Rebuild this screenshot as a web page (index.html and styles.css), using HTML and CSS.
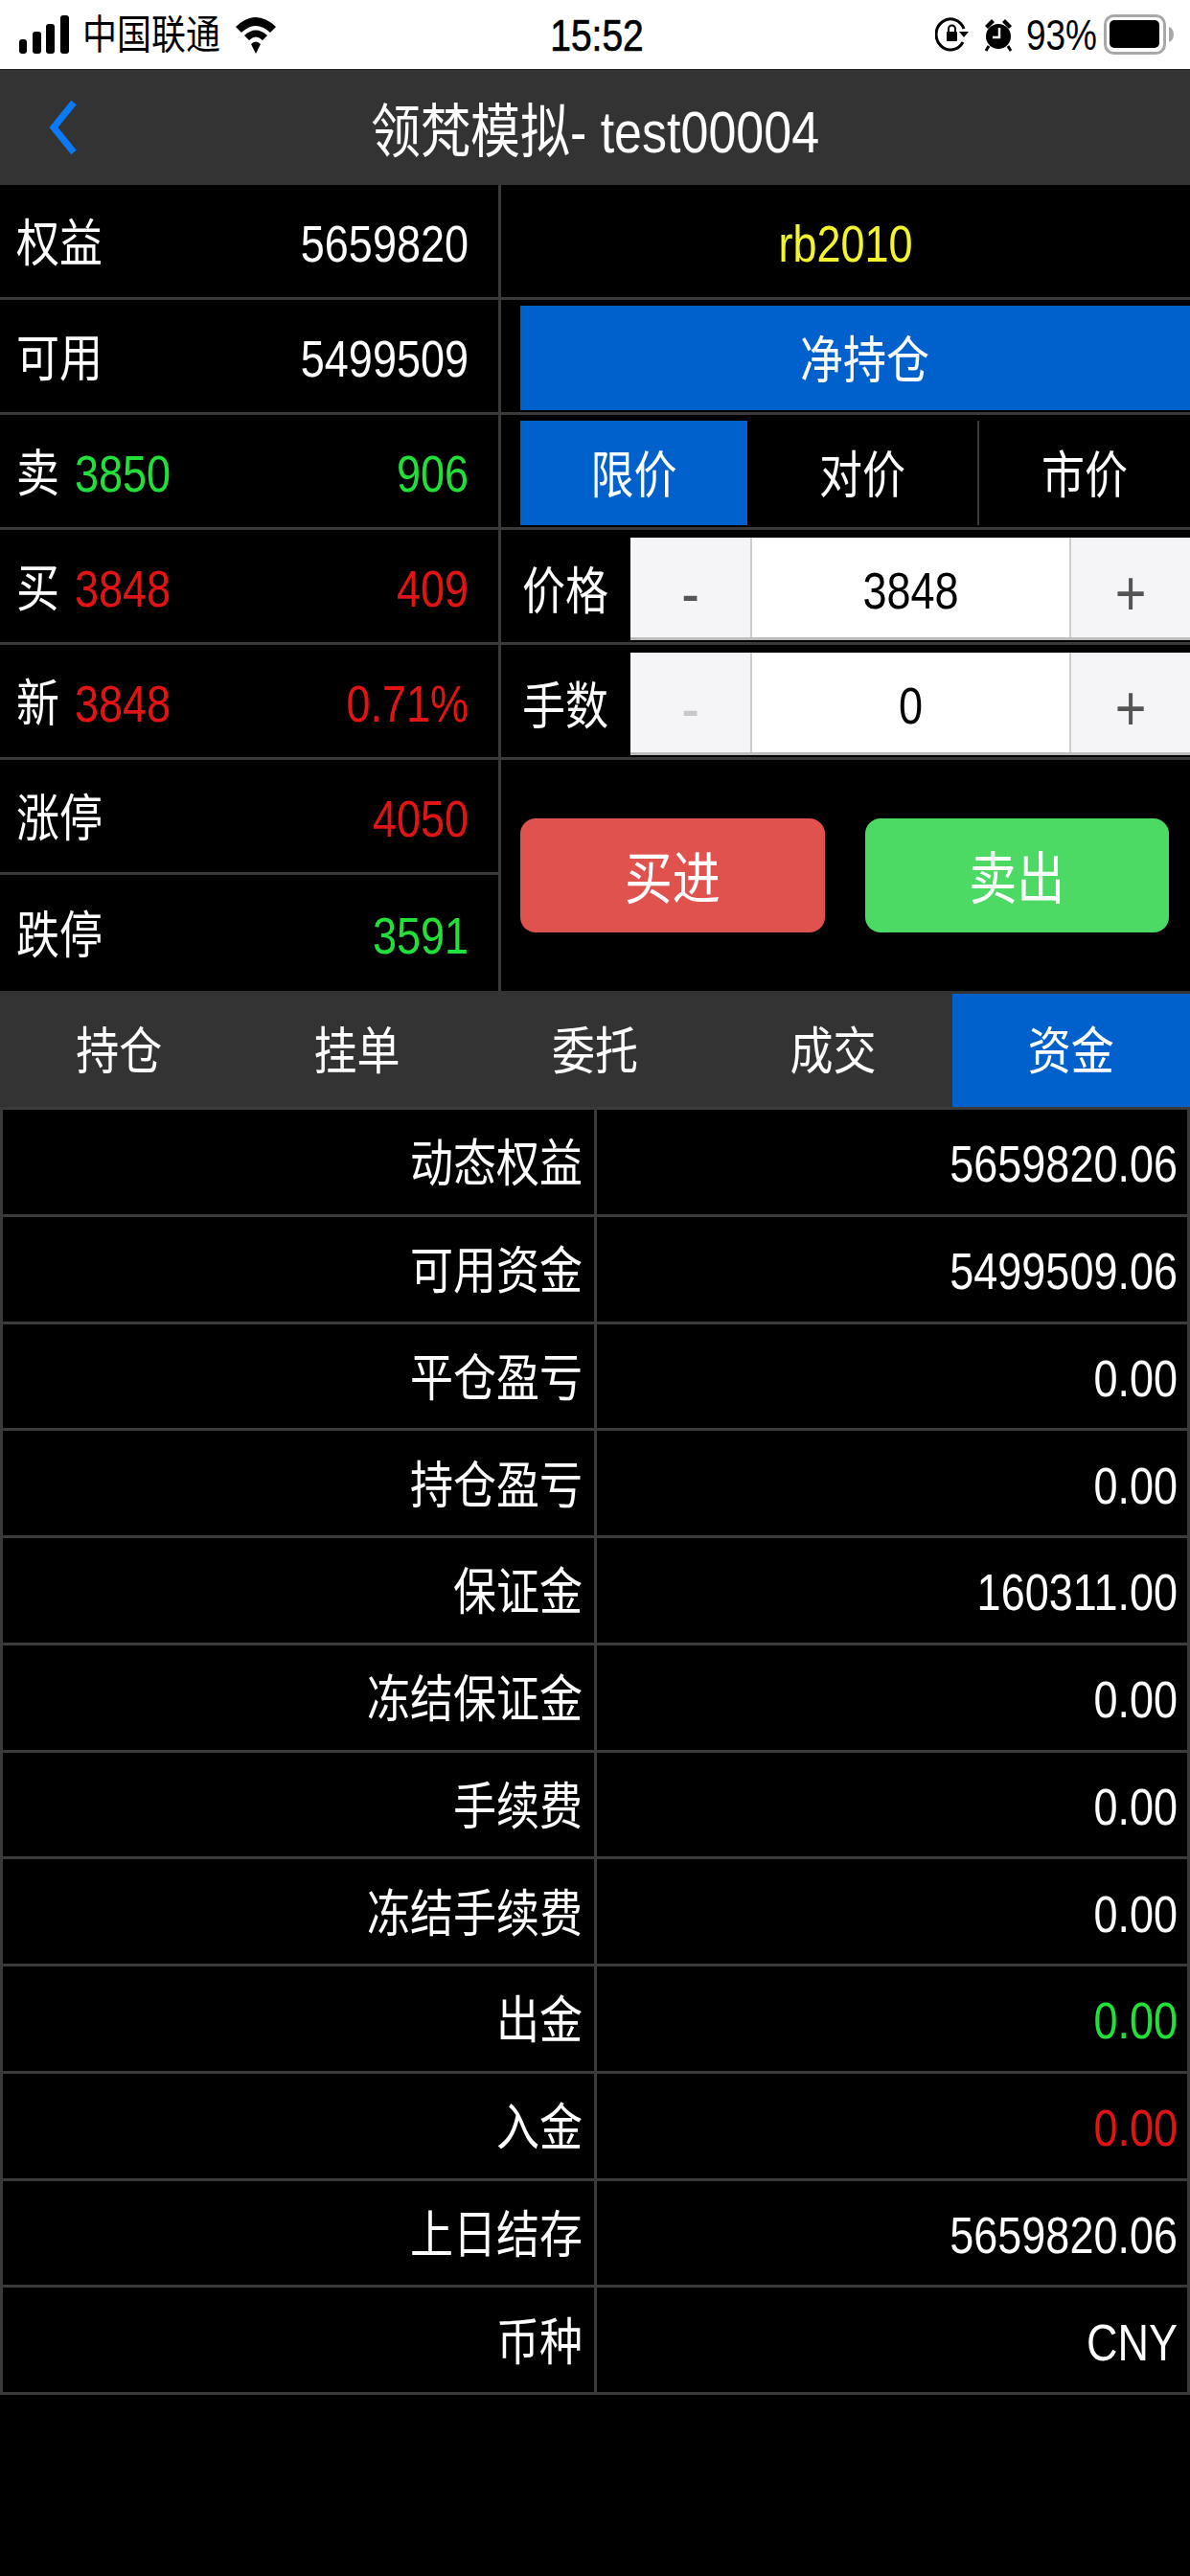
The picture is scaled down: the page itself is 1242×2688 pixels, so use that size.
FILE: index.html
```html
<!DOCTYPE html>
<html lang="zh-CN">
<head>
  <meta charset="UTF-8">
  <title>领梵模拟</title>
  <link rel="stylesheet" href="styles.css">
</head>
<body>
  <div class="status">
    <div class="status-left">
      <svg class="signal" width="52" height="40" viewBox="0 0 52 40">
        <rect x="0" y="25" width="8" height="15" rx="3"/>
        <rect x="14" y="17" width="9" height="23" rx="3"/>
        <rect x="28" y="9" width="9" height="31" rx="3"/>
        <rect x="43" y="0" width="9" height="40" rx="3"/>
      </svg>
      <span class="t carrier">中国联通</span>
      <svg class="wifi" width="46" height="42" viewBox="0 0 46 42">
        <path d="M2 13 Q23 -7 44 13 L38 19 Q23 5 8 19 Z"/>
        <path d="M11 22 Q23 11 35 22 L30 27 Q23 20 16 27 Z"/>
        <path d="M18 31 Q23 26 28 31 L23 41 Z"/>
      </svg>
    </div>
    <span class="t clock">15:52</span>
    <div class="status-right">
      <svg width="36" height="38" viewBox="0 0 36 38">
        <path d="M29 27 A15 16 0 1 1 30 13" fill="none" stroke="#000" stroke-width="3"/>
        <path d="M25 16 L35 16 L30 22 Z"/>
        <rect x="12" y="16" width="11" height="10" rx="1"/>
        <path d="M14 16 V13 a3.500 3.500 0 0 1 7 0 V16" fill="none" stroke="#000" stroke-width="2"/>
      </svg>
      <svg class="alarm" width="30" height="36" viewBox="0 0 30 36">
        <circle cx="15" cy="20" r="13"/>
        <path d="M1 9 L8 2 L11 5 L4 12 Z M29 9 L22 2 L19 5 L26 12 Z"/>
        <path d="M5 30 L2 35 M25 30 L28 35" stroke="#000" stroke-width="3"/>
        <path d="M16 11 V21 H9" fill="none" stroke="#fff" stroke-width="2.500"/>
      </svg>
      <span class="t percent">93%</span>
      <svg width="74" height="42" viewBox="0 0 74 42">
        <rect x="1.500" y="1.500" width="62" height="39" rx="9" fill="none" stroke="#a8a8a8" stroke-width="3"/>
        <rect x="6" y="6" width="52" height="29" rx="5"/>
        <path d="M68 13 Q73 15 73 21 Q73 27 68 29 Z" fill="#a8a8a8"/>
      </svg>
    </div>
  </div>

  <div class="nav">
    <svg class="back" width="32" height="58" viewBox="0 0 32 58">
      <path d="M27 3 L6 29 L27 55" fill="none" stroke="#0a7af5" stroke-width="7"/>
    </svg>
    <span class="t">领梵模拟- test00004</span>
  </div>

  <div class="panel">
    <div class="quotes">
      <div class="stat"><span class="t">权益</span><span class="t">5659820</span></div>
      <div class="stat"><span class="t">可用</span><span class="t">5499509</span></div>
      <div class="stat"><span class="t">卖</span><span class="t price up">3850</span><span class="t end up">906</span></div>
      <div class="stat"><span class="t">买</span><span class="t price down">3848</span><span class="t end down">409</span></div>
      <div class="stat"><span class="t">新</span><span class="t price down">3848</span><span class="t end down">0.71%</span></div>
      <div class="stat"><span class="t">涨停</span><span class="t down">4050</span></div>
      <div class="stat"><span class="t">跌停</span><span class="t up">3591</span></div>
    </div>

    <div class="order">
      <div class="order-row symbol"><span class="t">rb2010</span></div>
      <div class="order-row">
        <div class="net-btn"><span class="t">净持仓</span></div>
      </div>
      <div class="order-row">
        <div class="types">
          <div class="type active"><span class="t">限价</span></div>
          <div class="type"><span class="t">对价</span></div>
          <div class="type split"><span class="t">市价</span></div>
        </div>
      </div>
      <div class="order-row field">
        <span class="t field-label">价格</span>
        <div class="stepper">
          <div class="step"><span class="t">-</span></div>
          <div class="step-value"><span class="t">3848</span></div>
          <div class="step"><span class="t">+</span></div>
        </div>
      </div>
      <div class="order-row field">
        <span class="t field-label">手数</span>
        <div class="stepper">
          <div class="step off"><span class="t">-</span></div>
          <div class="step-value"><span class="t">0</span></div>
          <div class="step"><span class="t">+</span></div>
        </div>
      </div>
      <div class="actions">
        <div class="action buy"><span class="t">买进</span></div>
        <div class="action sell"><span class="t">卖出</span></div>
      </div>
    </div>
  </div>

  <div class="tabs">
    <div class="tab"><span class="t">持仓</span></div>
    <div class="tab"><span class="t">挂单</span></div>
    <div class="tab"><span class="t">委托</span></div>
    <div class="tab"><span class="t">成交</span></div>
    <div class="tab active"><span class="t">资金</span></div>
  </div>

  <table class="funds">
    <tr><td><span class="t">动态权益</span></td><td><span class="t">5659820.06</span></td></tr>
    <tr><td><span class="t">可用资金</span></td><td><span class="t">5499509.06</span></td></tr>
    <tr><td><span class="t">平仓盈亏</span></td><td><span class="t">0.00</span></td></tr>
    <tr><td><span class="t">持仓盈亏</span></td><td><span class="t">0.00</span></td></tr>
    <tr><td><span class="t">保证金</span></td><td><span class="t">160311.00</span></td></tr>
    <tr><td><span class="t">冻结保证金</span></td><td><span class="t">0.00</span></td></tr>
    <tr><td><span class="t">手续费</span></td><td><span class="t">0.00</span></td></tr>
    <tr><td><span class="t">冻结手续费</span></td><td><span class="t">0.00</span></td></tr>
    <tr><td><span class="t">出金</span></td><td><span class="t up">0.00</span></td></tr>
    <tr><td><span class="t">入金</span></td><td><span class="t down">0.00</span></td></tr>
    <tr><td><span class="t">上日结存</span></td><td><span class="t">5659820.06</span></td></tr>
    <tr><td><span class="t">币种</span></td><td><span class="t">CNY</span></td></tr>
  </table>
</body>
</html>
```

FILE: styles.css
```css
* {
  box-sizing: border-box;
}
html, body {
  margin: 0;
  background: #000;
}
body {
  width: 1242px;
  height: 2688px;
  overflow: hidden;
  color: #fff;
  font-family: "Liberation Sans", "Noto Sans CJK SC", sans-serif;
  font-size: 45px;
}

/* the screenshot is stretched a bit taller than wide */
.t {
  display: inline-block;
  line-height: 1;
  transform: translateY(3px) scaleY(1.18);
}
.up { color: #22e03a; }
.down { color: #e01414; }

.status {
  height: 72px;
  background: #fff;
  color: #000;
  display: flex;
  align-items: center;
  justify-content: space-between;
  padding: 0 16px 0 20px;
}
.status .t {
  transform: translateY(1px) scaleY(1.18);
}
.status-left, .status-right {
  display: flex;
  align-items: center;
  width: 300px;
}
.status-right {
  justify-content: flex-end;
}
.carrier {
  font-size: 36px;
  margin-left: 14px;
}
.wifi {
  margin-left: 14px;
}
.clock {
  font-size: 39px;
  -webkit-text-stroke: 0.6px #000;
}
.alarm {
  margin-left: 15px;
}
.percent {
  font-size: 37px;
  margin-left: 14px;
  margin-right: 7px;
}

.nav {
  height: 121px;
  background: #333;
  border-top: 1px solid #222;
  display: flex;
  align-items: center;
  justify-content: center;
  font-size: 52px;
  position: relative;
}
.nav .t {
  transform: translateY(5px) scaleY(1.18);
}
.back {
  position: absolute;
  left: 50px;
  top: 31px;
}

.panel {
  display: grid;
  grid-template-columns: 520px 1fr;
  height: 841px;
}
.quotes {
  display: flex;
  flex-direction: column;
}
.stat {
  height: 120px;
  border-bottom: 3px solid #3a3a3a;
  padding: 0 31px 0 17px;
  display: flex;
  align-items: center;
  justify-content: space-between;
}
.stat:last-child {
  border-bottom: none;
}
.price {
  margin-left: 16px;
}
.end {
  margin-left: auto;
}

.order {
  border-left: 3px solid #3a3a3a;
  display: flex;
  flex-direction: column;
}
.order-row {
  height: 120px;
  border-bottom: 3px solid #3a3a3a;
  padding: 7px 0 3px 20px;
  display: flex;
  align-items: center;
}
.symbol {
  justify-content: center;
  padding: 0;
  color: #f4f42e;
}
.net-btn {
  flex: 1;
  height: 109px;
  background: #0060cc;
  display: flex;
  align-items: center;
  justify-content: center;
  padding-left: 20px;
}
.types {
  flex: 1;
  height: 109px;
  display: grid;
  grid-template-columns: 237px 240px 1fr;
}
.type {
  display: flex;
  align-items: center;
  justify-content: center;
}
.type.active {
  background: #0060cc;
}
.type.split {
  border-left: 2px solid #3a3a3a;
}
.field {
  padding: 8px 0 2px 22px;
}
.field-label {
  width: 113px;
}
.stepper {
  flex: 1;
  height: 107px;
  background: #fff;
  color: #000;
  display: grid;
  grid-template-columns: 125px 1fr 124px;
  border-bottom: 3px solid #bbb;
}
.step, .step-value {
  display: flex;
  align-items: center;
  justify-content: center;
}
.step {
  background: #f5f5f7;
  color: #555;
  font-size: 56px;
  padding-top: 8px;
}
.step-value {
  border-left: 2px solid #ccc;
  border-right: 2px solid #ccc;
}
.step.off {
  color: #c8c8c8;
}
.actions {
  flex: 1;
  display: flex;
  align-items: center;
  gap: 42px;
  padding: 0 22px 0 20px;
}
.action {
  flex: 1;
  height: 119px;
  border-radius: 16px;
  display: flex;
  align-items: center;
  justify-content: center;
  font-size: 50px;
}
.action .t {
  transform: translateY(4px) scaleY(1.18);
}
.buy {
  background: #e0524e;
}
.sell {
  background: #4cd964;
}

.tabs {
  height: 121px;
  background: #333;
  display: grid;
  grid-template-columns: repeat(5, 1fr);
  padding-top: 3px;
}
.tab {
  display: flex;
  align-items: center;
  justify-content: center;
}
.tab .t {
  transform: translateY(1px) scaleY(1.18);
}
.tab.active {
  background: #0060cc;
}

.funds {
  width: 100%;
  border-collapse: collapse;
  table-layout: fixed;
}
.funds tr {
  height: 111.750px;
}
.funds td {
  border: 3px solid #3a3a3a;
  padding: 0 10px 0 0;
  text-align: right;
}
.funds td:first-child {
  width: 620px;
  padding-right: 12px;
}
```
